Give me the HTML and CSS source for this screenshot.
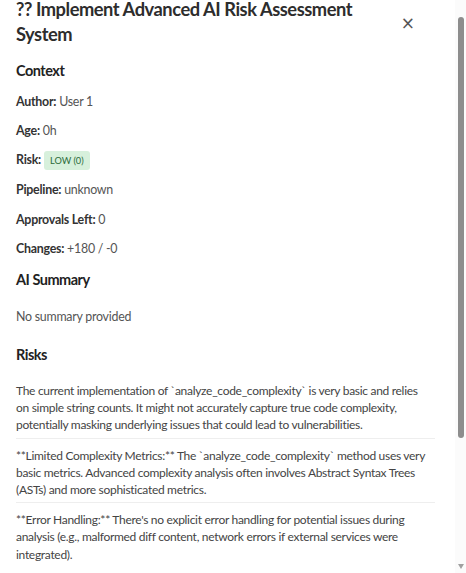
FILE: index.html
```html
<!DOCTYPE html>
<html lang="en">
<head>
<meta charset="utf-8">
<title>PR Details</title>
<link rel="stylesheet" href="styles.css">
</head>
<body>
<div class="viewport">
<div class="modal">
  <div class="modal-header">
    <h2 class="modal-title">?? Implement Advanced AI Risk Assessment System</h2>
    <button class="close-btn" type="button" aria-label="Close">&times;</button>
  </div>

  <section class="section">
    <h3 class="section-title context-title">Context</h3>
    <p class="field"><strong>Author:</strong> User 1</p>
    <p class="field"><strong>Age:</strong> 0h</p>
    <p class="field"><strong>Risk:</strong> <span class="badge badge-low">LOW (0)</span></p>
    <p class="field"><strong>Pipeline:</strong> unknown</p>
    <p class="field"><strong>Approvals Left:</strong> 0</p>
    <p class="field"><strong>Changes:</strong> +180 / -0</p>
  </section>

  <section class="section">
    <h3 class="section-title summary-title">AI Summary</h3>
    <p class="summary">No summary provided</p>
  </section>

  <section class="section">
    <h3 class="section-title risks-title">Risks</h3>
    <ul class="risk-list">
      <li class="risk-item">The current implementation of `analyze_code_complexity` is very basic and relies on simple string counts. It might not accurately capture true code complexity, potentially masking underlying issues that could lead to vulnerabilities.</li>
      <li class="risk-item">**Limited Complexity Metrics:** The `analyze_code_complexity` method uses very basic metrics. Advanced complexity analysis often involves Abstract Syntax Trees (ASTs) and more sophisticated metrics.</li>
      <li class="risk-item">**Error Handling:** There's no explicit error handling for potential issues during analysis (e.g., malformed diff content, network errors if external services were integrated).</li>
    </ul>
  </section>
</div>
</div>
<div class="scrollbar" aria-hidden="true">
  <div class="scroll-thumb"></div>
  <div class="scroll-arrow"></div>
</div>
</body>
</html>
```
FILE: styles.css
```css
html, body {
  margin: 0;
  height: 100%;
  background: #fff;
  overflow: hidden;
}
body {
  font-family: Lato, "Liberation Sans", sans-serif;
  color: #333;
}
.viewport {
  height: 100%;
}
.modal {
  padding: 0 31px 20px 16px;
}
.modal-header {
  display: flex;
  align-items: flex-start;
  justify-content: space-between;
  margin-top: -3px;
}
.modal-title {
  margin: 0;
  font-size: 18.3px;
  line-height: 25px;
  font-weight: 700;
  letter-spacing: -0.45px;
  color: #2d2d2d;
  max-width: 370px;
}
.close-btn {
  border: 0;
  background: none;
  font-size: 17px;
  line-height: 20px;
  color: #555;
  padding: 0;
  margin: 16px 20px 0 0;
  font-family: "DejaVu Sans", sans-serif;
  cursor: pointer;
}
.section-title {
  margin: 0;
  font-size: 14.5px;
  line-height: 20px;
  font-weight: 700;
  letter-spacing: -0.5px;
  color: #222;
}
.context-title {
  margin-top: 14px;
}
.summary-title {
  margin-top: 12px;
}
.risks-title {
  margin-top: 19px;
}
.field {
  margin: 12px 0 0;
  font-size: 12.4px;
  line-height: 18.2px;
  letter-spacing: -0.25px;
  color: #555;
}
.field + .field {
  margin-top: 11px;
}
.field strong {
  color: #333;
}
.badge {
  display: inline-block;
  font-size: 9.2px;
  line-height: 19px;
  padding: 0 6px;
  border-radius: 3px;
  font-weight: 400;
  letter-spacing: 0;
}
.badge-low {
  background: #d7f0dc;
  color: #2a6b39;
}
.summary {
  margin: 18px 0 0;
  font-size: 12.4px;
  line-height: 18px;
  letter-spacing: -0.25px;
  color: #555;
}
.risk-list {
  list-style: none;
  margin: 9px 0 0;
  padding: 0;
}
.risk-item {
  font-size: 12px;
  line-height: 17.2px;
  letter-spacing: -0.3px;
  color: #444;
  padding: 8px 2.5px 4px 0;
}
.risk-item + .risk-item {
  border-top: 1px solid #eee;
}
.scrollbar {
  position: fixed;
  top: 0;
  right: 0;
  bottom: 0;
  width: 11px;
  background: #fbfbfb;
  display: flex;
  flex-direction: column;
  align-items: center;
  padding: 17px 0 4px;
  box-sizing: border-box;
}
.scroll-thumb {
  width: 6px;
  height: 421px;
  border-radius: 3px;
  background: #8d8d8d;
}
.scroll-arrow {
  margin-top: auto;
  width: 0;
  height: 0;
  border-left: 3.5px solid transparent;
  border-right: 3.5px solid transparent;
  border-top: 5px solid #a0a0a0;
}
```
